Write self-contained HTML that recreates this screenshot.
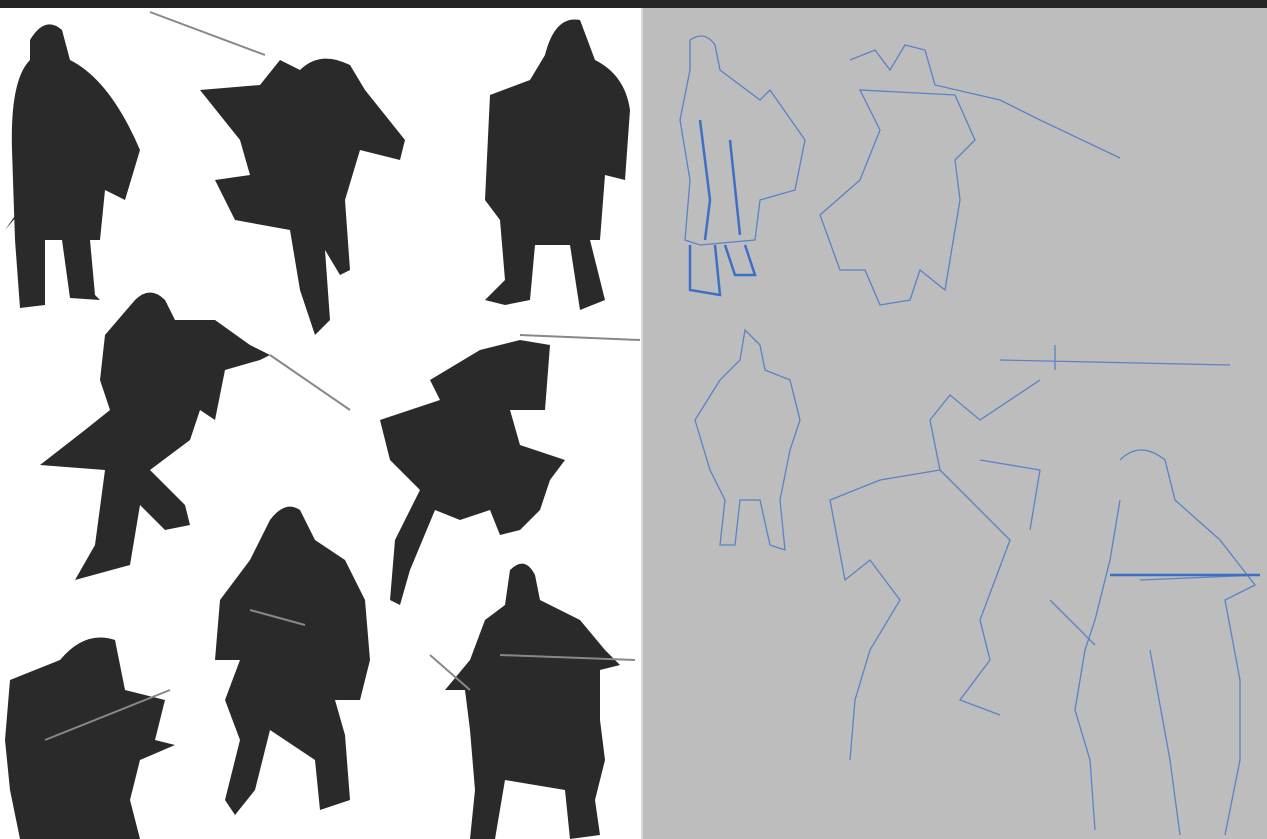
<!DOCTYPE html>
<html><head><meta charset="utf-8"><style>
html,body{margin:0;padding:0;width:1267px;height:839px;overflow:hidden;background:#222}
svg{display:block}
</style></head><body>
<svg width="1267" height="839" viewBox="0 0 1267 839">
<rect x="0" y="0" width="1267" height="8" fill="#252525"/>
<rect x="0" y="8" width="641" height="831" fill="#fff"/>
<rect x="641" y="8" width="2" height="831" fill="#d8d8d8"/>
<rect x="643" y="8" width="624" height="831" fill="#bdbdbd"/>
<g fill="#2a2a2a">
<!-- fig1 -->
<path d="M30 40 Q45 15 62 30 L70 60 Q110 80 140 150 L125 200 L105 190 L100 240 L90 240 L95 295 L100 300 L70 298 L62 240 L45 240 L45 305 L20 308 L15 240 L12 150 Q10 80 30 60 Z"/>
<path d="M5 230 L40 180 L35 195 Z" />
<!-- fig2 -->
<path d="M200 90 L260 85 L280 60 L300 70 Q320 50 350 65 L365 90 L405 140 L400 160 L360 150 L345 200 L350 270 L340 275 L325 250 L330 320 L315 335 L300 290 L290 230 L235 220 L215 180 L250 175 L240 140 Z"/>
<!-- fig3 -->
<path d="M545 55 Q555 15 580 20 L595 60 Q625 75 630 110 L625 180 L605 175 L600 240 L590 240 L605 300 L580 310 L570 245 L535 245 L530 300 L505 305 L485 300 L505 280 L500 220 L485 200 L490 95 L530 80 Z"/>
<!-- fig4 -->
<path d="M135 300 Q150 285 165 300 L175 320 L215 320 L250 345 L270 355 L260 360 L225 370 L215 420 L200 410 L190 440 L150 470 L170 490 L185 505 L190 525 L165 530 L140 505 L130 565 L75 580 L95 545 L105 470 L40 465 L85 430 L110 410 L100 380 L105 335 Z"/>
<!-- fig5 -->
<path d="M430 380 L480 350 L520 340 L550 345 L545 410 L510 410 L520 445 L565 460 L550 480 L540 510 L520 530 L500 535 L490 510 L460 520 L435 510 L410 570 L400 605 L390 600 L395 540 L420 490 L390 460 L380 420 L440 400 Z"/>
<!-- fig6 -->
<path d="M10 680 L60 660 Q85 630 115 640 L125 690 L165 700 L155 740 L175 745 L140 760 L130 800 L140 839 L20 839 L10 790 L5 740 Z"/>
<!-- fig7 -->
<path d="M270 520 Q285 500 300 510 L315 540 L345 560 L365 600 L370 660 L360 700 L335 700 L345 735 L350 800 L320 810 L315 760 L270 730 L255 790 L235 815 L225 800 L240 740 L225 700 L240 660 L215 660 L220 600 L250 560 Z"/>
<!-- fig8 -->
<path d="M510 570 Q525 555 535 575 L540 600 L580 620 L605 650 L620 665 L600 670 L600 720 L605 760 L595 800 L600 835 L570 839 L565 790 L505 780 L495 839 L470 839 L475 790 L470 730 L465 690 L445 690 L470 660 L485 620 L505 605 Z"/>
</g>
<g stroke="#888" stroke-width="2" fill="none">
<path d="M150 12 L265 55"/><path d="M270 355 L350 410"/><path d="M520 335 L640 340"/><path d="M45 740 L170 690"/><path d="M500 655 L635 660"/><path d="M430 655 L470 690"/><path d="M250 610 L305 625"/>
</g>
<g stroke="#5a82c8" stroke-width="1.3" fill="none">
<path d="M690 40 Q705 30 715 45 L720 70 L760 100 L770 90 L805 140 L795 190 L760 200 L755 240 L700 245 L685 240 L690 180 L680 120 L690 70 Z"/>
<path d="M690 245 L690 290 L720 295 L715 245 M725 245 L735 275 L755 275 L745 245" stroke="#3d6fc4" stroke-width="2.5"/>
<path d="M700 120 L710 200 L705 240 M730 140 L740 235" stroke="#3d6fc4" stroke-width="2.5"/>
<path d="M850 60 L875 50 L890 70 L905 45 L925 50 L935 85 L1000 100 L1040 120 L1120 158 M955 95 L975 140 L955 160 L960 200 L945 290 L920 270 L910 300 L880 305 L865 270 L840 270 L820 215 L860 180 L880 130 L860 90 Z"/>
<path d="M745 330 L760 345 L765 370 L790 380 L800 420 L790 450 L780 500 L785 550 L770 545 L760 500 L740 500 L735 545 L720 545 L725 500 L710 470 L695 420 L720 380 L740 360 Z"/>
<path d="M1000 360 L1230 365 M1055 345 L1055 370 M1040 380 L980 420 L950 395 L930 420 L940 470 L880 480 L830 500 L845 580 L870 560 L900 600 L870 650 L855 700 L850 760 M940 470 L1010 540 L980 620 L990 660 L960 700 L1000 715 M980 460 L1040 470 L1030 530"/>
<path d="M1120 460 Q1140 440 1165 460 L1175 500 L1220 540 L1255 585 L1225 600 L1240 680 L1240 760 L1225 835 M1120 500 L1110 560 L1095 620 L1085 650 L1075 710 L1090 760 L1095 830 M1140 580 L1260 575 M1150 650 L1170 760 L1180 835 M1050 600 L1095 645"/>
<path d="M1110 575 L1260 575" stroke="#3d6fc4" stroke-width="2.5"/>
</g>
</svg>
</body></html>
